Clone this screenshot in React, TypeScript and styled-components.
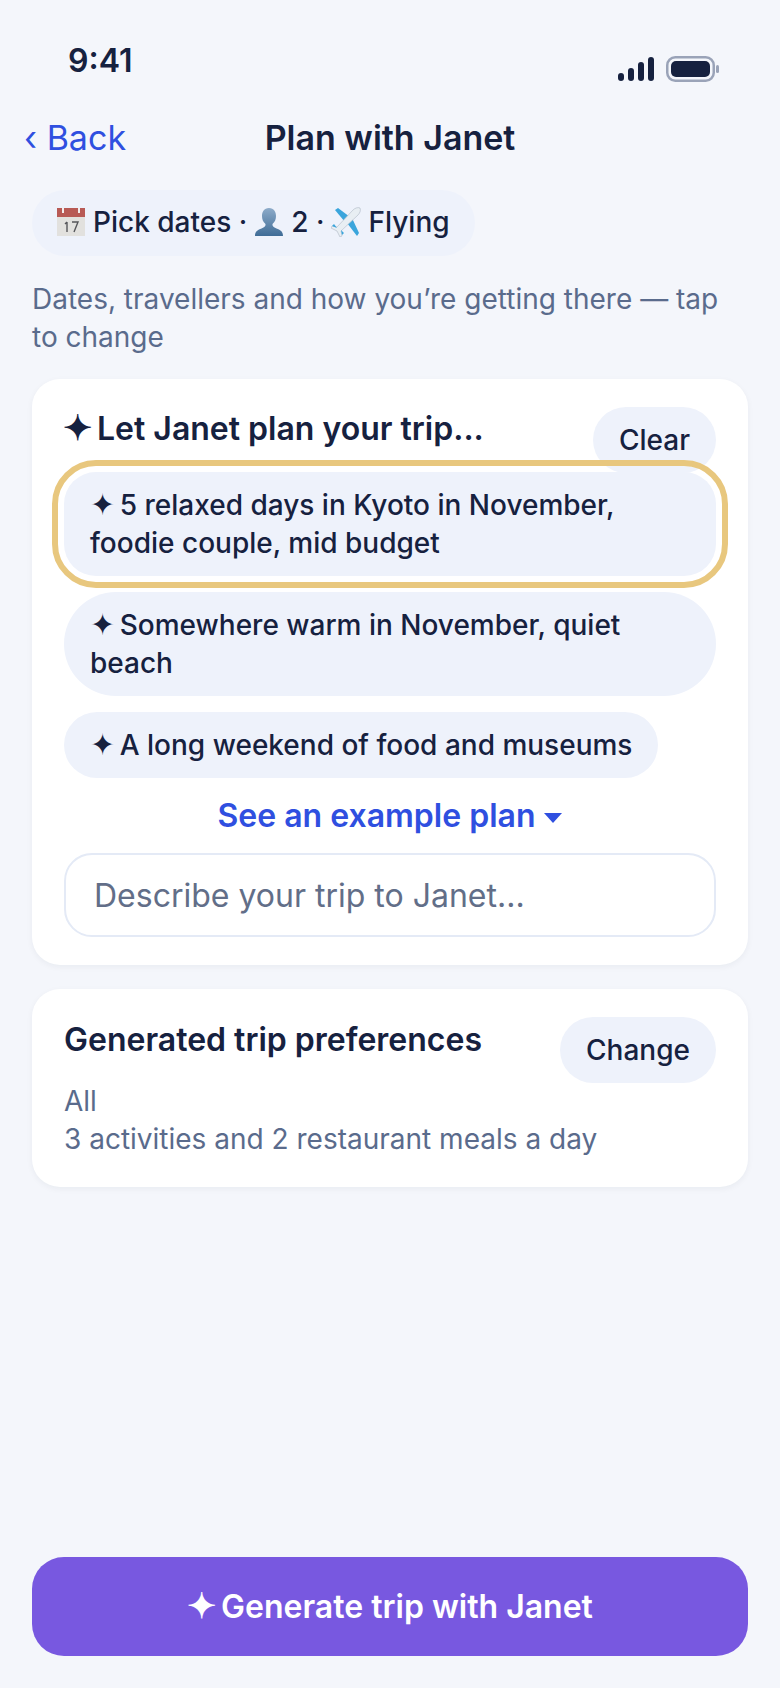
import React from "react";
import styled, { createGlobalStyle } from "styled-components";

const Global = createGlobalStyle`
  html, body { margin: 0; padding: 0; background: #f4f6fb; }
  * { box-sizing: border-box; }
  body { font-family: Inter, "Noto Sans", sans-serif; color: #16213f; }
`;

const Page = styled.div`
  width: 780px;
  height: 1688px;
  display: flex;
  flex-direction: column;
  background: #f4f6fb;
  padding: 0 32px 32px;
`;

const StatusBar = styled.div`
  display: flex;
  justify-content: space-between;
  align-items: flex-start;
  height: 116px;
  padding: 41px 28px 0 36px;
`;

const Time = styled.span`
  font-size: 32px;
  line-height: 40px;
  font-weight: 600;
`;

const StatusIcons = styled.svg`
  width: 104px;
  height: 30px;
  margin-top: 13px;
  display: block;
`;

const Nav = styled.div`
  display: grid;
  grid-template-columns: 1fr auto 1fr;
  align-items: center;
  height: 44px;
  margin: 0 -8px;
`;

const Back = styled.span`
  font-size: 34px;
  line-height: 44px;
  color: #2f4fe0;
`;

const Title = styled.span`
  font-size: 34px;
  line-height: 44px;
  font-weight: 600;
`;

const Summary = styled.div`
  align-self: flex-start;
  display: flex;
  align-items: center;
  gap: 7px;
  height: 66px;
  margin-top: 30px;
  padding: 0 25px 2px 24px;
  border-radius: 33px;
  background: #eef2fb;
  font-size: 28px;
  font-weight: 500;
`;

const Hint = styled.p`
  margin: 24px 0 0;
  font-size: 28px;
  line-height: 38px;
  color: #5a6b8c;
`;

const Card = styled.section`
  margin-top: 24px;
  padding: 28px 32px;
  background: #fff;
  border-radius: 28px;
  box-shadow: 0 2px 6px rgba(22, 33, 63, 0.05);
  &:first-of-type {
    margin-top: 23px;
  }
`;

const CardHead = styled.div`
  display: flex;
  justify-content: space-between;
  align-items: flex-start;
`;

const CardTitle = styled.h2`
  margin: 2px 0 0 -1px;
  font-size: 32px;
  line-height: 40px;
  font-weight: 600;
`;

const SmallButton = styled.button`
  height: 66px;
  padding: 0 26px;
  border: 0;
  border-radius: 33px;
  background: #eef2fb;
  color: #16213f;
  font: 500 28px Inter, sans-serif;
`;

const Spark = styled.span`
  font-size: 1.08em;
  line-height: 0;
  letter-spacing: -0.09em;
`;

const Chips = styled.div`
  display: flex;
  flex-direction: column;
  align-items: flex-start;
  gap: 16px;
  margin-top: -1px;
`;

const Chip = styled.div<{ $selected?: boolean }>`
  padding: 14px 26px;
  background: #eef2fb;
  font-size: 28px;
  line-height: 38px;
  font-weight: 500;
  border-radius: ${(p) => (p.$selected ? "32px" : "52px")};
  ${(p) => p.$selected && "outline: 6px solid #e8c77e; outline-offset: 6px; align-self: stretch;"}
`;

const Example = styled.div`
  display: flex;
  justify-content: center;
  align-items: center;
  gap: 9px;
  margin-top: 18px;
  font-size: 32px;
  line-height: 40px;
  font-weight: 600;
  color: #2f4fe0;
`;

const Caret = styled.svg`
  width: 18px;
  height: 10px;
  margin-top: 4px;
`;

const Input = styled.div`
  height: 84px;
  margin-top: 17px;
  padding: 0 28px;
  display: flex;
  align-items: center;
  border: 2px solid #e4eaf6;
  border-radius: 28px;
  font-size: 32px;
  color: #626e88;
`;

const PrefTitle = styled.h3`
  margin: 3px 0 0;
  font-size: 32px;
  line-height: 40px;
  font-weight: 600;
`;

const PrefLines = styled.p`
  margin: -1px 0 1px;
  font-size: 28px;
  line-height: 38px;
  color: #5a6b8c;
`;

const PrefHead = styled.div`
  display: flex;
  justify-content: space-between;
  align-items: flex-start;
`;

const Generate = styled.button`
  margin-top: auto;
  height: 99px;
  border: 0;
  border-radius: 32px;
  background: #7858e0;
  color: #fff;
  font: 600 32px Inter, sans-serif;
`;

const Emoji = styled.svg`
  width: 30px;
  height: 30px;
  flex: none;
`;

const Calendar = () => (
  <Emoji viewBox="0 0 30 30">
    <rect x="1" y="1" width="28" height="28" fill="#e2e1de" />
    <rect x="1" y="1" width="28" height="9" fill="#b85a55" />
    <path d="M7 1v5M23 1v5" stroke="#f3eeee" strokeWidth="2" />
    <path d="M11 15v10M9 17l2-2M16 15h6l-4 10" stroke="#55565a" strokeWidth="1.4" fill="none" />
  </Emoji>
);

const Person = () => (
  <Emoji viewBox="0 0 30 30">
    <defs>
      <linearGradient id="pg" x1="0" y1="0" x2="0" y2="1">
        <stop offset="0" stopColor="#8dabc9" />
        <stop offset="1" stopColor="#3f6c96" />
      </linearGradient>
    </defs>
    <path
      d="M15 1c-5 0-7 4-7 8 0 3 1 6 3.500 8 .5 2-1 3-4 4.500C4 23 1 24 1 29h28c0-5-3-6-6.500-7.500-3-1.500-4.500-2.500-4-4.500C21 15 22 12 22 9c0-4-2-8-7-8z"
      fill="url(#pg)"
    />
  </Emoji>
);

const Plane = () => (
  <Emoji viewBox="0 0 30 30">
    <path d="M4 3l3-2 12 9-5 5z" fill="#3aa5dc" />
    <path d="M16 16l5-5 7 15-2 3z" fill="#3aa5dc" />
    <path d="M29 1c-2-1-5 0-7 2L6 20l-5-1-1 2 6 3 3 6 2-1-1-5L27 8c2-2 3-5 2-7z" fill="#e8eef3" stroke="#aeb9c4" strokeWidth=".6" />
    <path d="M3 17l-2 2 5 2zM10 23l1 5 2-2z" fill="#3aa5dc" />
  </Emoji>
);

export default function App() {
  return (
    <Page>
      <Global />
      <StatusBar>
        <Time>9:41</Time>
        <StatusIcons viewBox="0 0 104 30">
          <rect x="2" y="19" width="6" height="8" rx="3" fill="#16213f" />
          <rect x="12" y="14" width="6" height="13" rx="3" fill="#16213f" />
          <rect x="22" y="8" width="6" height="19" rx="3" fill="#16213f" />
          <rect x="32" y="3" width="6" height="24" rx="3" fill="#16213f" />
          <rect x="51.250" y="3.250" width="46.500" height="23.500" rx="8" fill="none" stroke="#9aa3b8" strokeWidth="2.500" />
          <rect x="55" y="7" width="39" height="16" rx="5" fill="#16213f" />
          <rect x="100" y="11" width="3" height="8" rx="1.500" fill="#9aa3b8" />
        </StatusIcons>
      </StatusBar>
      <Nav>
        <Back>‹ Back</Back>
        <Title>Plan with Janet</Title>
        <span />
      </Nav>
      <Summary>
        <Calendar />
        Pick dates ·
        <Person />
        2 ·
        <Plane />
        Flying
      </Summary>
      <Hint>Dates, travellers and how you’re getting there — tap to change</Hint>
      <Card>
        <CardHead>
          <CardTitle>
            <Spark>✦</Spark> Let Janet plan your trip...
          </CardTitle>
          <SmallButton>Clear</SmallButton>
        </CardHead>
        <Chips>
          <Chip $selected>
            <Spark>✦</Spark> 5 relaxed days in Kyoto in November, foodie couple, mid budget
          </Chip>
          <Chip>
            <Spark>✦</Spark> Somewhere warm in November, quiet beach
          </Chip>
          <Chip>
            <Spark>✦</Spark> A long weekend of food and museums
          </Chip>
        </Chips>
        <Example>
          See an example plan
          <Caret viewBox="0 0 18 10">
            <path d="M0 0h18L9 10z" fill="#2f4fe0" />
          </Caret>
        </Example>
        <Input>Describe your trip to Janet...</Input>
      </Card>
      <Card>
        <PrefHead>
          <PrefTitle>Generated trip preferences</PrefTitle>
          <SmallButton>Change</SmallButton>
        </PrefHead>
        <PrefLines>
          All
          <br />3 activities and 2 restaurant meals a day
        </PrefLines>
      </Card>
      <Generate>
        <Spark>✦</Spark> Generate trip with Janet
      </Generate>
    </Page>
  );
}
